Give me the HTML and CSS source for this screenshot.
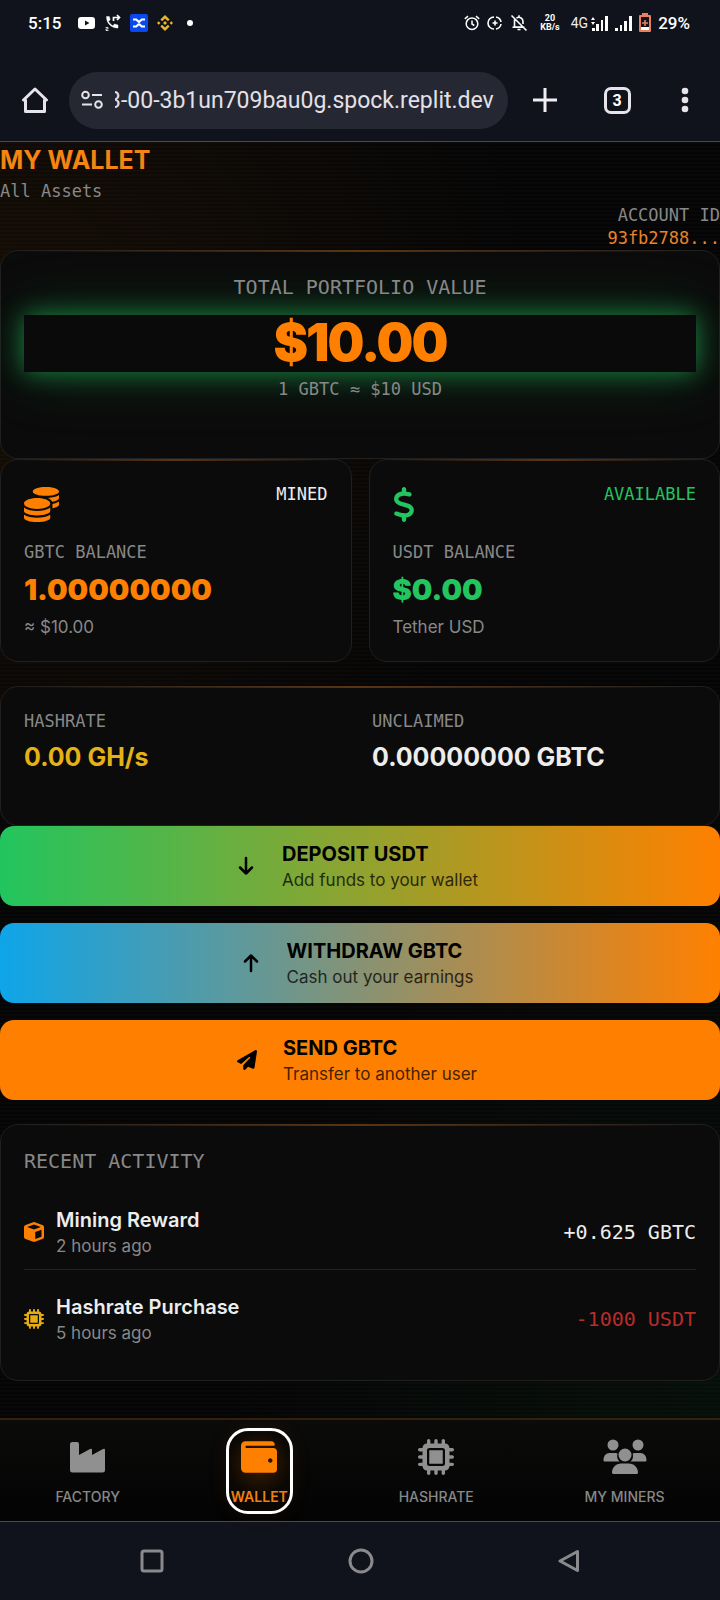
FILE: index.html
```html
<!DOCTYPE html>
<html lang="en">
<head>
<meta charset="utf-8">
<meta name="viewport" content="width=device-width, initial-scale=1">
<title>My Wallet</title>
<link rel="stylesheet" href="styles.css">
</head>
<body>
<svg class="defs" width="0" height="0" aria-hidden="true">
  <symbol id="chip" viewBox="0 0 512 512"><path d="M176 24c0-13.300-10.700-24-24-24s-24 10.700-24 24V64c-35.300 0-64 28.700-64 64H24c-13.300 0-24 10.700-24 24s10.700 24 24 24H64v56H24c-13.300 0-24 10.700-24 24s10.700 24 24 24H64v56H24c-13.300 0-24 10.700-24 24s10.700 24 24 24H64c0 35.300 28.700 64 64 64v40c0 13.300 10.700 24 24 24s24-10.700 24-24V448h56v40c0 13.300 10.700 24 24 24s24-10.700 24-24V448h56v40c0 13.300 10.700 24 24 24s24-10.700 24-24V448c35.300 0 64-28.700 64-64h40c13.300 0 24-10.700 24-24s-10.700-24-24-24H448V280h40c13.300 0 24-10.700 24-24s-10.700-24-24-24H448V176h40c13.300 0 24-10.700 24-24s-10.700-24-24-24H448c0-35.300-28.700-64-64-64V24c0-13.300-10.700-24-24-24s-24 10.700-24 24V64H280V24c0-13.300-10.700-24-24-24s-24 10.700-24 24V64H176V24zM160 128H352c17.700 0 32 14.300 32 32V352c0 17.700-14.300 32-32 32H160c-17.700 0-32-14.300-32-32V160c0-17.700 14.300-32 32-32zm192 32H160V352H352V160z" fill-rule="evenodd"/></symbol>
</svg>

<header class="browser">
  <div class="status">
    <div class="status-left">
      <span class="clock">5:15</span>
      <svg width="18" height="18" viewBox="0 0 18 18"><rect x="0" y="3" width="17" height="12" rx="3" fill="#fff"/><path d="M7 6.500v5l4.500-2.500z" fill="#10131b"/></svg>
      <svg width="16" height="18" viewBox="0 0 16 18" fill="none" stroke="#fff"><path d="M1.500 2.500h2.800l.9 3.200-1.700 1.600c1 2 2.300 3.400 4.300 4.400l1.700-1.600 3.500.9v3C6.500 14.500 1.200 9 1.500 2.500z" fill="#fff" stroke-width=".4"/><path d="M8.500 7V3.500H14M12 1l2.500 2.500L12 6" stroke-width="1.700"/><path d="M.5 13.500h2.500v1.500h-2v1.500h2.500" stroke-width=".8"/></svg>
      <svg width="18" height="18" viewBox="0 0 18 18"><rect width="18" height="18" rx="2" fill="#0848ee"/><path d="M3 5.500h3.200L9 8l2.800-2.500H15M3 12.500h3.200L9 10l2.800 2.500H15" fill="none" stroke="#fff" stroke-width="2.200"/></svg>
      <svg width="16" height="16" viewBox="0 0 16 16" fill="#e9b52c"><path d="M8 0l4.600 4.600-1.700 1.700L8 3.400 5.100 6.300 3.400 4.600zM8 16l4.600-4.600-1.700-1.700L8 12.600 5.100 9.700l-1.700 1.700zM8 6l2 2-2 2-2-2zM1.700 6.300L3.400 8 1.700 9.700 0 8zM14.300 6.300L16 8l-1.700 1.700L12.600 8z"/></svg>
      <svg width="16" height="16" viewBox="0 0 16 16"><circle cx="8" cy="8" r="3" fill="#fff"/></svg>
    </div>
    <div class="status-right">
      <svg width="16" height="16" viewBox="0 0 16 16" fill="none" stroke="#fff" stroke-width="1.500"><circle cx="8" cy="8.700" r="5.800"/><path d="M8 5.500v3.500l2.300 1.500M.8 3.800L4 1.200M15.200 3.800L12 1.200"/></svg>
      <svg width="16" height="16" viewBox="0 0 16 16" fill="none" stroke="#fff" stroke-width="1.600"><path d="M7 2a6 6 0 0 0 0 12M9 2a6 6 0 0 1 5 5M14 9a6 6 0 0 1-5 5M8 5.500v5M5.500 8h5"/></svg>
      <svg width="18" height="18" viewBox="0 0 18 18" fill="none" stroke="#fff" stroke-width="1.600"><path d="M4.500 5.500V13H13M2.500 13.200h12M6.500 4.200C9 2 13 4 13 7.500V10M9 1.200v2M7.500 15.500h3M1.500 1.500l15 15"/></svg>
      <span class="rate">20<br>KB/s</span>
      <span class="net">4G</span>
      <svg class="signal" width="17" height="16" viewBox="0 0 17 16" fill="#fff"><path d="M0 5l2-3 2 3zM0 7h4L2 10zM1 13h3v3H1zM5 9h3v7H5zM10 5h2v11h-2zM14 1h3v15h-3z"/></svg>
      <svg width="17" height="16" viewBox="0 0 17 16" fill="#fff"><path d="M0 13h3v3H0zM5 10h2v6H5zM9 6h3v10H9zM14 1h3v15h-3z"/></svg>
      <svg width="12" height="20" viewBox="0 0 12 20"><path d="M3 0h6v2h2q1 0 1 1v15q0 1-1 1H1q-1 0-1-1V3q0-1 1-1h2z" fill="#e6805f"/><path d="M2 4h8v10H2z" fill="#10131b"/><path d="M2 14h8v3H2z" fill="#fff"/><path d="M6 7v6M3 10h6" stroke="#e6805f" stroke-width="1.600"/></svg>
      <span class="clock">29%</span>
    </div>
  </div>
  <div class="toolbar">
    <button class="tool" aria-label="Home"><svg width="28" height="28" viewBox="0 0 28 28" fill="none" stroke="#e6e3ea" stroke-width="3" stroke-linejoin="round" stroke-linecap="round"><path d="M2.500 14L14 3l11.500 11H23.500V25.500h-19V14z"/></svg></button>
    <div class="address">
      <svg width="22" height="20" viewBox="0 0 22 20" fill="none" stroke="#e6e3ea" stroke-width="2"><circle cx="4.500" cy="5" r="3.300"/><circle cx="17.500" cy="14.500" r="3.300"/><path d="M11 5h10M1 14.500h10"/></svg>
      <input class="url" type="text" aria-label="Address" value="3-00-3b1un709bau0g.spock.replit.dev">
    </div>
    <button class="tool" aria-label="New tab"><svg width="24" height="24" viewBox="0 0 24 24" stroke="#f0edf3" stroke-width="3"><path d="M12 0v24M0 12h24"/></svg></button>
    <button class="tool" aria-label="Tabs"><span class="tabs">3</span></button>
    <button class="tool" aria-label="Menu"><svg width="8" height="26" viewBox="0 0 8 26" fill="#e6e3ea"><circle cx="4" cy="4" r="3.300"/><circle cx="4" cy="13" r="3.300"/><circle cx="4" cy="22" r="3.300"/></svg></button>
  </div>
</header>

<div class="app">
<main class="wallet">
  <section class="intro">
    <h1>MY WALLET</h1>
    <p class="label">All Assets</p>
    <p class="label account">ACCOUNT ID</p>
    <p class="label account id">93fb2788...</p>
  </section>

  <section class="card total">
    <p class="heading">TOTAL PORTFOLIO VALUE</p>
    <p class="amount">$10.00</p>
    <p class="label">1 GBTC ≈ $10 USD</p>
  </section>

  <div class="balances">
    <section class="card balance">
      <div class="balance-top">
        <svg width="35" height="35" viewBox="0 0 512 512" fill="#ff8000"><path d="M0 405.300V448c0 35.300 86 64 192 64s192-28.700 192-64v-42.700C342.700 434.400 267.200 448 192 448S41.300 434.400 0 405.300zM320 128c106 0 192-28.700 192-64S426 0 320 0 128 28.700 128 64s86 64 192 64zM0 300.400V352c0 35.300 86 64 192 64s192-28.700 192-64v-51.600c-41.300 34-116.900 51.600-192 51.600S41.300 334.400 0 300.400zm416 11c57.300-11.100 96-31.700 96-55.400v-42.700c-23.200 16.400-57.300 27.600-96 34.500v63.600zM192 160C86 160 0 195.800 0 240s86 80 192 80 192-35.800 192-80-86-80-192-80zm219.300 56.300c60-10.800 100.700-32 100.700-56.300v-42.700c-35.500 25.100-96.500 38.600-160.700 41.800 29.500 14.300 51.200 33.500 60 57.200z"/></svg>
        <span class="label tag-mined">MINED</span>
      </div>
      <p class="label">GBTC BALANCE</p>
      <p class="figure orange">1.00000000</p>
      <p class="note">≈ $10.00</p>
    </section>
    <section class="card balance">
      <div class="balance-top">
        <svg width="22" height="35" viewBox="0 0 320 512" fill="#22c55e"><path d="M160 0c17.700 0 32 14.300 32 32V67.700c1.600 .2 3.100 .4 4.700 .7c.4 .1 .7 .1 1.100 .2l48 8.800c17.400 3.200 28.900 19.900 25.700 37.200s-19.900 28.900-37.200 25.700l-47.500-8.700c-31.300-4.600-58.900-1.500-78.300 6.200s-27.200 18.300-29 28.100c-2 10.700-.5 16.700 1.200 20.400c1.800 3.900 5.500 8.300 12.800 13.200c16.300 10.700 41.300 17.700 73.700 26.300l2.900 .8c28.600 7.600 63.600 16.800 89.600 33.800c14.200 9.300 27.600 21.900 35.900 39.500c8.500 17.900 10.300 37.900 6.400 59.200c-6.900 38-33.100 63.400-65.600 76.700c-13.700 5.600-28.600 9.200-44.400 11V480c0 17.700-14.300 32-32 32s-32-14.300-32-32V445.100c-.4-.1-.9-.1-1.300-.2l-.2 0c-24.400-3.800-64.500-14.300-91.500-26.300c-16.100-7.200-23.400-26.100-16.200-42.200s26.100-23.400 42.200-16.200c20.900 9.300 55.300 18.500 75.200 21.600c31.900 4.700 58.200 2 76-5.300c16.900-6.900 24.600-16.900 26.800-28.900c1.900-10.600 .4-16.700-1.300-20.400c-1.900-4-5.600-8.400-13-13.300c-16.400-10.700-41.500-17.700-74-26.300l-2.800-.7C119.400 279.300 84.400 270 58.400 253c-14.200-9.300-27.500-22-35.800-39.600c-8.400-17.900-10.100-37.900-6.100-59.200C23.700 116 52.300 91.200 84.800 78.300c13.300-5.300 27.900-8.900 43.200-11V32c0-17.700 14.300-32 32-32z"/></svg>
        <span class="label tag-available">AVAILABLE</span>
      </div>
      <p class="label">USDT BALANCE</p>
      <p class="figure green">$0.00</p>
      <p class="note">Tether USD</p>
    </section>
  </div>

  <section class="card stats">
    <div><p class="label">HASHRATE</p><p class="stat gold">0.00 GH/s</p></div>
    <div><p class="label">UNCLAIMED</p><p class="stat">0.00000000 GBTC</p></div>
  </section>

  <div class="actions">
    <button class="action deposit">
      <svg width="20" height="20" viewBox="0 0 20 20" fill="none" stroke="#000" stroke-width="2.500" stroke-linecap="round" stroke-linejoin="round"><path d="M10 2v15.500M4 11.500l6 6 6-6"/></svg>
      <span class="action-text"><span class="action-title">DEPOSIT USDT</span><span class="action-note">Add funds to your wallet</span></span>
    </button>
    <button class="action withdraw">
      <svg width="20" height="20" viewBox="0 0 20 20" fill="none" stroke="#000" stroke-width="2.500" stroke-linecap="round" stroke-linejoin="round"><path d="M10 18V2.500M4 8.500l6-6 6 6"/></svg>
      <span class="action-text"><span class="action-title">WITHDRAW GBTC</span><span class="action-note">Cash out your earnings</span></span>
    </button>
    <button class="action send">
      <svg width="20" height="20" viewBox="0 0 512 512"><path d="M498.100 5.600c10.100 7 15.400 19.100 13.500 31.200l-64 416c-1.500 9.700-7.400 18.200-16 23s-18.900 5.400-28 1.600L284 427.700l-68.500 74.100c-8.900 9.700-22.900 12.900-35.200 8.100S160 493.200 160 480V396.400c0-4 1.500-7.800 4.200-10.700L331.800 202.800c5.800-6.300 5.600-16-.4-22s-15.700-6.400-22-.7L106 360.800 17.700 316.600C7.100 311.300 .3 300.700 0 288.900s5.900-22.800 16.100-28.700l448-256c10.700-6.100 23.900-5.500 34 1.400z"/></svg>
      <span class="action-text"><span class="action-title">SEND GBTC</span><span class="action-note">Transfer to another user</span></span>
    </button>
  </div>

  <section class="card activity">
    <h2 class="heading">RECENT ACTIVITY</h2>
    <ul class="rows">
      <li class="row">
        <svg width="20" height="20" viewBox="0 0 512 512" fill="#ff8000"><path d="M234.500 5.700c13.900-5 29.100-5 43.100 0l192 68.600C495 83.400 512 107.500 512 134.600V377.400c0 27-17 51.200-42.500 60.300l-192 68.600c-13.900 5-29.100 5-43.100 0l-192-68.600C17 428.600 0 404.500 0 377.400V134.600c0-27 17-51.200 42.500-60.300zM256 66L82 130l174 62 174-62zM288 434l160-57V197l-160 56z" fill-rule="evenodd"/></svg>
        <div class="row-text"><p class="row-title">Mining Reward</p><p class="note">2 hours ago</p></div>
        <span class="change">+0.625 GBTC</span>
      </li>
      <li class="row">
        <svg class="gold-icon" width="20" height="20"><use href="#chip"/></svg>
        <div class="row-text"><p class="row-title">Hashrate Purchase</p><p class="note">5 hours ago</p></div>
        <span class="change spent">-1000 USDT</span>
      </li>
    </ul>
  </section>
</main>

<nav class="nav">
  <button class="nav-item">
    <svg width="36" height="36" viewBox="0 0 36 36"><path d="M2.500 3H7q2 0 2 2v11l11-6q2-1 2 1v5l11-6q2-1 2 1v20q0 2.500-2.500 2.500h-30Q0 33.500 0 31V5q0-2 2.500-2z"/></svg>
    <span>FACTORY</span>
  </button>
  <button class="nav-item active">
    <svg width="36" height="36" viewBox="0 0 512 512"><path d="M461.200 128H80c-8.840 0-16-7.160-16-16s7.160-16 16-16h384c8.840 0 16-7.160 16-16 0-26.510-21.490-48-48-48H64C28.650 32 0 60.650 0 96v320c0 35.350 28.650 64 64 64h397.200c28.020 0 50.800-21.530 50.800-48V176c0-26.470-22.780-48-50.800-48zM416 336c-17.670 0-32-14.330-32-32s14.330-32 32-32 32 14.330 32 32-14.330 32-32 32z"/></svg>
    <span>WALLET</span>
  </button>
  <button class="nav-item">
    <svg width="36" height="36"><use href="#chip"/></svg>
    <span>HASHRATE</span>
  </button>
  <button class="nav-item">
    <svg width="44" height="36" viewBox="0 0 44 36"><circle cx="10" cy="6" r="5.500"/><circle cx="35" cy="6" r="5.500"/><circle cx="22" cy="16" r="6.500"/><path d="M6.500 14h6q1.500 0 2 .7c-1 3 0 6 2 7.800H1.500Q.5 22.500.5 21.200C.5 17 3 14 6.500 14zM31.500 14h6c3.500 0 6 3 6 7.200q0 1.300-1 1.300h-15c2.500-2 3-5 2.200-7.800q.6-.7 1.800-.7zM18 24.500h8c5 0 9 4 9 9q0 1.500-1.500 1.500h-23Q9 35 9 33.500c0-5 4-9 9-9z"/></svg>
    <span>MY MINERS</span>
  </button>
</nav>
</div>

<footer class="system">
  <button class="key" aria-label="Recents"><svg width="24" height="24" viewBox="0 0 24 24"><rect x="2" y="2" width="20" height="20" rx="2"/></svg></button>
  <button class="key" aria-label="Home"><svg width="26" height="26" viewBox="0 0 26 26"><circle cx="13" cy="13" r="11"/></svg></button>
  <button class="key" aria-label="Back"><svg width="22" height="24" viewBox="0 0 22 24"><path d="M19.500 2.500v19L2 12z"/></svg></button>
</footer>
</body>
</html>
```
FILE: styles.css
```css
* { box-sizing: border-box; }
body {
  margin: 0;
  min-height: 100vh;
  display: flex;
  flex-direction: column;
  background: #10131b;
  color: #ededed;
  font-family: Inter, "Liberation Sans", sans-serif;
}
h1, h2, p, ul { margin: 0; padding: 0; }
ul { list-style: none; }
button { border: 0; background: none; color: inherit; font: inherit; padding: 0; }
svg { display: block; flex: none; }
.defs { position: absolute; }

.browser {
  height: 142px;
  border-bottom: 1px solid #494a50;
  font-family: Roboto, sans-serif;
}
.status {
  display: flex;
  justify-content: space-between;
  align-items: center;
  height: 46px;
  padding: 0 30px 0 28px;
}
.status-left, .status-right { display: flex; align-items: center; gap: 9px; }
.status-left .clock { margin-right: 8px; }
.clock { font-size: 17px; font-weight: 500; color: #fff; }
.rate {
  font-size: 9px;
  line-height: 9px;
  font-weight: 700;
  text-align: center;
  color: #fff;
  margin: 0 4px 0 5px;
}
.net { font-size: 14px; color: #eee; }
.status-right { gap: 7px; }
.signal { margin-left: -4px; }
.toolbar {
  display: flex;
  align-items: center;
  height: 108px;
  padding: 0 18px 0 21px;
}
.tool { display: grid; place-items: center; width: 34px; height: 48px; margin-left: 38px; }
.tool:first-child { width: 28px; margin-left: 0; }
.tool:last-child { margin-left: 34px; }
.address {
  flex: 1;
  min-width: 0;
  display: flex;
  align-items: center;
  gap: 12px;
  height: 57px;
  margin-left: 20px;
  margin-right: -18px;
  padding: 0 12px;
  border-radius: 29px;
  background: #252833;
}
.url {
  flex: 1;
  min-width: 0;
  border: 0;
  padding: 0;
  background: none;
  color: #e3e0e8;
  font: 23px Roboto, sans-serif;
  text-indent: -7px;
}
.tabs {
  display: grid;
  place-items: center;
  width: 27px;
  height: 27px;
  border: 3px solid #e6e3ea;
  border-radius: 7px;
  color: #fff;
  font: 700 16px Roboto, sans-serif;
}

.app {
  flex: 1;
  display: flex;
  flex-direction: column;
  background:
    repeating-linear-gradient(rgba(255, 255, 255, 0.012) 0 2px, transparent 2px 4px),
    radial-gradient(circle at 0 15%, rgba(255, 128, 0, 0.07), transparent 40%),
    radial-gradient(circle at 100% 90%, rgba(34, 197, 94, 0.05), transparent 35%),
    #050505;
}
.wallet { flex: 1; }
.label { font: 17px/23px "DejaVu Sans Mono", monospace; color: #888; }
.heading { font: 20px/28px "DejaVu Sans Mono", monospace; color: #888; }
.intro h1 { font-size: 25px; line-height: 36px; font-weight: 700; color: #f58512; }
.intro h1 + .label { line-height: 26px; }
.account { text-align: right; }
.account.id { color: #e98427; }

.card {
  position: relative;
  padding: 23px;
  border: 1px solid #202020;
  border-radius: 18px;
  background: #0b0b0b;
}
.card::before {
  content: "";
  position: absolute;
  top: -1px;
  left: 18px;
  right: 18px;
  height: 2px;
  background: linear-gradient(90deg, transparent, #5a3413, transparent);
}
.total { height: 209px; text-align: center; padding-top: 22px; }
.amount {
  margin: 14px 0 6px;
  height: 57px;
  background: #0a0a0a;
  box-shadow: 0 0 24px rgba(34, 197, 94, 0.6), 0 0 60px rgba(34, 197, 94, 0.25);
  color: #ff8000;
  font-size: 52px;
  line-height: 56px;
  font-weight: 900;
  letter-spacing: -2px;
}
.balances { display: grid; grid-template-columns: 1fr 1fr; gap: 17px; }
.balance { padding-bottom: 22px; }
.balance-top { display: flex; justify-content: space-between; height: 58px; }
.balance-top svg { margin-top: 4px; }
.balance-top + .label { margin-bottom: 9px; }
.figure { font-size: 29px; line-height: 34px; font-weight: 900; }
.orange { color: #ff8000; }
.green { color: #22c55e; }
.tag-mined { color: #eee; }
.tag-available { color: #22c55e; }
.note { font-size: 17px; line-height: 24px; color: #888; }
.figure + .note { margin-top: 8px; }
.stats { display: grid; grid-template-columns: 1fr 1fr; column-gap: 24px; margin-top: 24px; height: 140px; }
.stat { margin-top: 8px; font-size: 25px; line-height: 32px; font-weight: 700; }
.gold { color: #e5b116; }

.actions { display: grid; gap: 17px; }
.action {
  display: flex;
  align-items: center;
  justify-content: center;
  gap: 26px;
  height: 80px;
  padding-right: 6px;
  border-radius: 14px;
  color: #000;
  text-align: left;
}
.deposit { background: linear-gradient(90deg, #22c55e, #ff8000); }
.withdraw { background: linear-gradient(90deg, #0ea5e9, #ff8000); }
.send { background: #ff8000; }
.action-text { display: grid; }
.action-title { font-size: 20px; line-height: 27px; font-weight: 700; }
.action-note { font-size: 17px; line-height: 24px; opacity: 0.75; }

.activity { margin-top: 24px; padding-top: 22px; }
.row { display: flex; align-items: center; gap: 12px; height: 87px; }
.row:first-child { margin-top: 11px; height: 84px; padding-top: 8px; border-bottom: 1px solid #222; }
.row:last-child { padding-top: 10px; }
.row-text { flex: 1; }
.row-title { font-size: 20px; line-height: 28px; font-weight: 600; }
.gold-icon { fill: #e2ac12; }
.change { font: 20px/28px "DejaVu Sans Mono", monospace; }
.spent { color: #b92c2a; }

.nav {
  display: flex;
  justify-content: space-around;
  align-items: center;
  height: 103px;
  border-top: 2px solid #34200e;
  background: linear-gradient(#0b0b0a, #030303);
  color: #888;
}
.nav-item {
  display: flex;
  flex-direction: column;
  align-items: center;
  gap: 12px;
  padding: 7px 1px 3px;
  font: 500 14px/20px Inter, sans-serif;
}
.nav-item svg { fill: #909090; }
.active {
  border-radius: 18px;
  outline: 3px solid #fff;
  outline-offset: 1px;
  background: radial-gradient(circle at 50% 40%, #3b1e02, #0a0704 60%);
  box-shadow: 0 0 24px rgba(255, 128, 0, 0.1);
  color: #f08010;
  font-weight: 600;
}
.active svg { fill: #ff8000; }

.system {
  display: flex;
  justify-content: space-around;
  align-items: center;
  height: 79px;
  padding: 0 48px;
  border-top: 1px solid #474b4b;
}
.key svg { fill: none; stroke: #8a8a8e; stroke-width: 3px; stroke-linejoin: round; }
```
